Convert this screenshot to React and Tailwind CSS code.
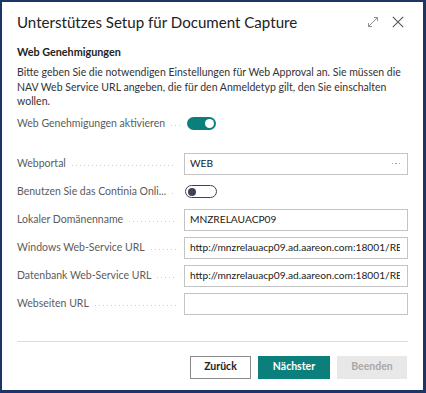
const FONT = { fontFamily: 'Lato, "Liberation Sans", sans-serif' }

const ROWS = [
  { label: 'Webportal', type: 'lookup', value: 'WEB' },
  { label: 'Benutzen Sie das Continia Onli...', type: 'toggle', on: false },
  { label: 'Lokaler Domänenname', type: 'text', value: 'MNZRELAUACP09' },
  { label: 'Windows Web-Service URL', type: 'text', value: 'http://mnzrelauacp09.ad.aareon.com:18001/REI' },
  { label: 'Datenbank Web-Service URL', type: 'text', value: 'http://mnzrelauacp09.ad.aareon.com:18001/REI' },
  { label: 'Webseiten URL', type: 'text', value: '' },
]

function Toggle({ on }) {
  if (on) {
    return (
      <div className="flex h-[13px] w-[29px] items-center justify-end rounded-full bg-[#0a7f7b] pr-[2px]">
        <div className="h-[9px] w-[9px] rounded-full bg-white" />
      </div>
    )
  }
  return (
    <div className="flex h-[13px] w-[32px] items-center rounded-full border border-[#444] bg-white pl-[2px]">
      <div className="h-[8px] w-[8px] rounded-full bg-[#3b4557]" />
    </div>
  )
}

// leader dots between a label and its field
function Dots({ className }) {
  return (
    <span
      className={`mt-[4px] h-px bg-[linear-gradient(to_right,#cdcdcd_1px,transparent_1px)] bg-[length:4px_1px] ${className}`}
    />
  )
}

function Label({ text }) {
  return (
    <div className="flex w-[167px] shrink-0 items-center text-[10.5px] text-[#5c5c5c]">
      <span className="shrink-0 whitespace-nowrap">{text}</span>
      <Dots className="ml-[6px] mr-[8px] flex-1" />
    </div>
  )
}

function Field({ row }) {
  return (
    <div className="flex h-[28px] items-center">
      <Label text={row.label} />
      {row.type === 'toggle' ? (
        <div className="pl-[1px]">
          <Toggle on={row.on} />
        </div>
      ) : (
        <div className="flex h-[22px] min-w-0 flex-1 items-center overflow-hidden border border-[#c4c4c4] bg-white pl-[5px] pr-[7px] text-[10.2px] text-[#222]">
          <span className="min-w-0 flex-1 overflow-hidden whitespace-nowrap">{row.value}</span>
          {row.type === 'lookup' && (
            <span className="flex gap-[2px]">
              <span className="h-[1.5px] w-[1.5px] rounded-full bg-[#888]" />
              <span className="h-[1.5px] w-[1.5px] rounded-full bg-[#888]" />
              <span className="h-[1.5px] w-[1.5px] rounded-full bg-[#888]" />
            </span>
          )}
        </div>
      )}
    </div>
  )
}

export default function App() {
  return (
    <div
      className="flex h-[393px] w-[426px] flex-col border-t-2 border-l-2 border-r-[3px] border-b-[3px] border-[#1c3565] bg-white px-[15px]"
      style={FONT}
    >
      <div className="flex items-center justify-between pt-[10px]">
        <h1 className="text-[15.1px] leading-[20px] text-[#222]">Unterstützes Setup für Document Capture</h1>
        <div className="flex items-center gap-[13px] pr-[4px]">
          <svg width="12" height="12" viewBox="0 0 12 12" fill="none" stroke="#8f8f8f" strokeWidth="1">
            <path d="M1.5 10.5 L10.5 1.5 M7 1.5 H10.5 V5 M1.5 7 V10.5 H5" />
          </svg>
          <svg width="12" height="12" viewBox="0 0 12 12" fill="none" stroke="#555" strokeWidth="1.1">
            <path d="M0.8 0.8 L11.2 11.2 M11.2 0.8 L0.8 11.2" />
          </svg>
        </div>
      </div>

      <h2 className="mt-[12px] text-[10.8px] font-bold leading-[16px] text-[#222]">Web Genehmigungen</h2>
      <p className="mt-[5px] text-[10.5px] leading-[14.5px] text-[#333]">
        Bitte geben Sie die notwendigen Einstellungen für Web Approval an. Sie müssen die NAV Web Service URL angeben, die für den Anmeldetyp gilt, den Sie einschalten wollen.
      </p>

      <div className="mt-[5px] flex h-[20px] items-center">
        <span className="whitespace-nowrap text-[10.5px] text-[#5c5c5c]">Web Genehmigungen aktivieren</span>
        <Dots className="ml-[6px] mr-[7px] w-[9px]" />
        <Toggle on />
      </div>

      <div className="mt-[16px] flex flex-col">
        {ROWS.map((row) => (
          <Field key={row.label} row={row} />
        ))}
      </div>

      <div className="mt-[23px] border-t border-[#dcdcdc]" />

      <div className="mt-[14px] flex justify-end gap-[7px] pr-[1px]">
        <button type="button" className="h-[23px] w-[61px] border border-[#8a8a8a] bg-white text-[10.5px] font-bold text-[#222]">
          Zurück
        </button>
        <button type="button" className="h-[23px] w-[72px] bg-[#0a7f7b] text-[10.5px] font-bold text-white">
          Nächster
        </button>
        <button type="button" className="h-[23px] w-[70px] bg-[#e8e8e8] text-[10.5px] font-bold text-[#a9a9a9]">
          Beenden
        </button>
      </div>
    </div>
  )
}
